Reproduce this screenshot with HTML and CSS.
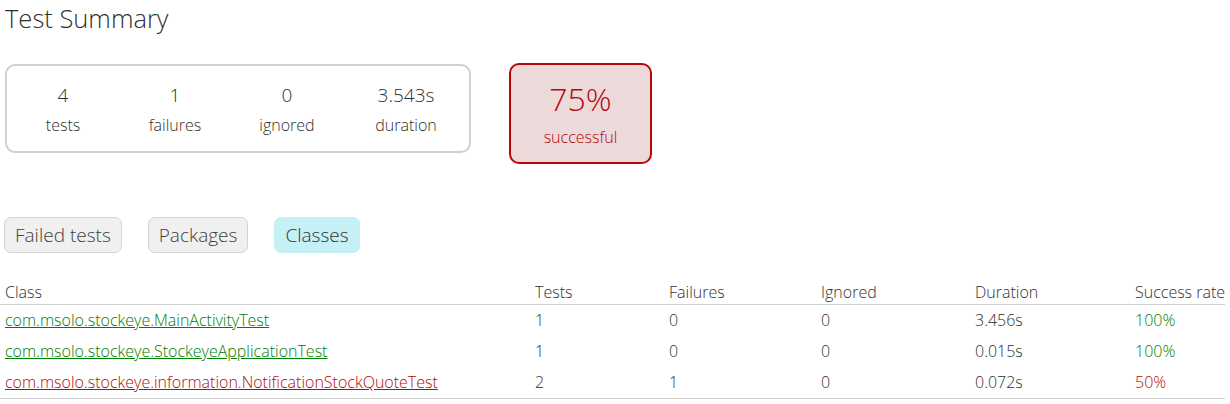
FILE: index.html
```html
<!DOCTYPE html>
<html>
<head>
<meta charset="utf-8">
<link rel="stylesheet" href="styles.css">
</head>
<body>
<h1 class="title">Test Summary</h1>
<div class="summary">
  <div class="summary-group">
    <div class="info-box"><p class="counter">4</p><p class="label">tests</p></div>
    <div class="info-box"><p class="counter">1</p><p class="label">failures</p></div>
    <div class="info-box"><p class="counter">0</p><p class="label">ignored</p></div>
    <div class="info-box duration"><p class="counter">3.543s</p><p class="label">duration</p></div>
  </div>
  <div class="success-rate failures">
    <p class="percent">75%</p>
    <p class="label">successful</p>
  </div>
</div>
<ul class="tabs">
  <li class="tab">Failed tests</li>
  <li class="tab">Packages</li>
  <li class="tab selected">Classes</li>
</ul>
<table class="results">
  <thead>
    <tr>
      <th class="c-class">Class</th>
      <th class="c-tests">Tests</th>
      <th class="c-fail">Failures</th>
      <th class="c-ign">Ignored</th>
      <th class="c-dur">Duration</th>
      <th class="c-rate">Success rate</th>
    </tr>
  </thead>
  <tbody>
    <tr>
      <td class="ok"><a href="#">com.msolo.stockeye.MainActivityTest</a></td>
      <td>1</td><td>0</td><td>0</td><td>3.456s</td><td class="ok">100%</td>
    </tr>
    <tr>
      <td class="ok"><a href="#">com.msolo.stockeye.StockeyeApplicationTest</a></td>
      <td>1</td><td>0</td><td>0</td><td>0.015s</td><td class="ok">100%</td>
    </tr>
    <tr>
      <td class="bad"><a href="#">com.msolo.stockeye.information.NotificationStockQuoteTest</a></td>
      <td>2</td><td>1</td><td>0</td><td>0.072s</td><td class="bad">50%</td>
    </tr>
  </tbody>
</table>
</body>
</html>
```
FILE: styles.css
```css
body {
  margin: 0;
  font-family: "Open Sans", "Noto Sans", sans-serif;
  font-weight: 300;
  color: #303030;
}
p { margin: 0; }
.title {
  margin: 0;
  padding: 0 5px;
  font-size: 25.5px;
  font-weight: 300;
  line-height: 36px;
}
.summary {
  display: flex;
  align-items: flex-start;
  gap: 38px;
  margin: 28px 0 0 5px;
}
.summary-group {
  display: flex;
  border: 2px solid #d0d0d0;
  border-radius: 10px;
  height: 85px;
  width: 462px;
}
.info-box {
  width: 112px;
  text-align: center;
  padding-top: 15px;
}
.info-box.duration { width: 126px; }
.counter {
  font-size: 19px;
  line-height: 28px;
}
.label {
  font-size: 16px;
  line-height: 32px;
}
.success-rate {
  margin-top: -1px;
  width: 139px;
  height: 97px;
  border: 2px solid #b60808;
  border-radius: 10px;
  background: #ecdada;
  color: #b60808;
  text-align: center;
}
.percent {
  font-size: 32px;
  line-height: 40px;
  margin-top: 14px;
}
.success-rate .label { line-height: 36px; }
.tabs {
  display: flex;
  gap: 26px;
  list-style: none;
  margin: 53px 0 0 4px;
  padding: 0;
}
.tab {
  font-size: 19px;
  line-height: 34px;
  padding: 0 10px;
  border: 1px solid #d4d4d4;
  border-radius: 7px;
  background: #f0f0f0;
  color: #404040;
}
.tab.selected {
  background: #c5f0f5;
  border-color: #c5f0f5;
  color: #303030;
}
.results {
  margin-top: 28px;
  border-collapse: collapse;
  border-bottom: 1px solid #d0d0d0;
  font-size: 16px;
}
.results th {
  text-align: left;
  font-weight: 300;
  padding: 0 0 1px 5px;
  border-bottom: 1px solid #d0d0d0;
  line-height: 22px;
  white-space: nowrap;
}
.results td {
  padding: 0 0 0 5px;
  line-height: 31px;
  white-space: nowrap;
  font-size: 16px;
}
.c-class { width: 525px; }
.c-tests { width: 129px; }
.c-fail { width: 147px; }
.c-ign { width: 149px; }
.c-dur { width: 155px; }
.ok, .ok a { color: #008000; }
.bad, .bad a { color: #b60808; }
```
